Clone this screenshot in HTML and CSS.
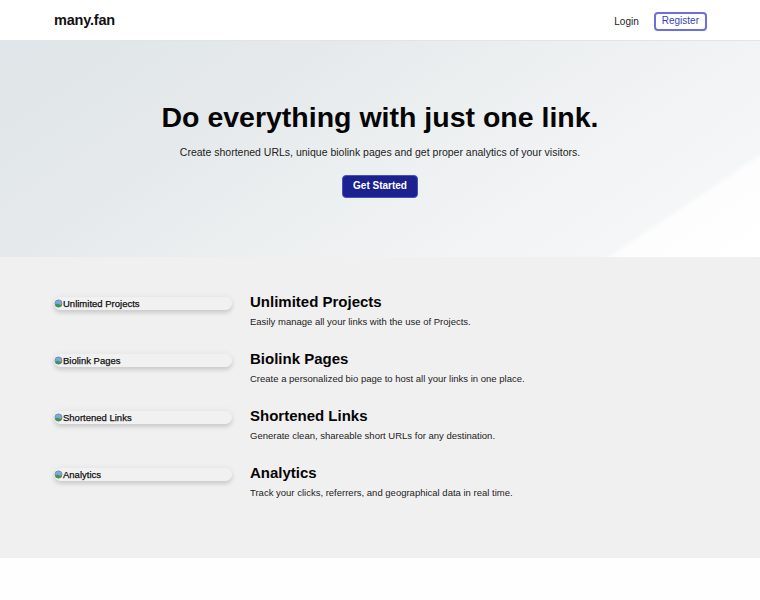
FILE: index.html
```html
<!DOCTYPE html>
<html lang="en">
<head>
<meta charset="utf-8">
<title>many.fan</title>
<link rel="stylesheet" href="styles.css">
</head>
<body>
<header class="nav">
  <div class="container nav-inner">
    <a class="logo" href="#">many.fan</a>
    <div class="nav-links">
      <a class="login" href="#">Login</a>
      <a class="register" href="#">Register</a>
    </div>
  </div>
</header>
<section class="hero">
  <h1>Do everything with just one link.</h1>
  <p class="lead">Create shortened URLs, unique biolink pages and get proper analytics of your visitors.</p>
  <a class="cta" href="#">Get Started</a>
</section>
<section class="features">
  <div class="container feature-list">
    <div class="feature">
      <div class="shot"><svg class="broken" viewBox="0 0 16 16" aria-hidden="true"><circle cx="8" cy="8" r="6.5" fill="#7fa6d8"/><path d="M1.8 10.5 Q5 7 8 9 T14.4 9.5 L14 11 Q11 15 8 14.5 Q4 14.5 1.8 10.5Z" fill="#3f9a3c"/><circle cx="8" cy="8" r="6.5" fill="none" stroke="#5a6f8a" stroke-width="0.8"/></svg>Unlimited Projects</div>
      <div class="text"><h2>Unlimited Projects</h2><p>Easily manage all your links with the use of Projects.</p></div>
    </div>
    <div class="feature">
      <div class="shot"><svg class="broken" viewBox="0 0 16 16" aria-hidden="true"><circle cx="8" cy="8" r="6.5" fill="#7fa6d8"/><path d="M1.8 10.5 Q5 7 8 9 T14.4 9.5 L14 11 Q11 15 8 14.5 Q4 14.5 1.8 10.5Z" fill="#3f9a3c"/><circle cx="8" cy="8" r="6.5" fill="none" stroke="#5a6f8a" stroke-width="0.8"/></svg>Biolink Pages</div>
      <div class="text"><h2>Biolink Pages</h2><p>Create a personalized bio page to host all your links in one place.</p></div>
    </div>
    <div class="feature">
      <div class="shot"><svg class="broken" viewBox="0 0 16 16" aria-hidden="true"><circle cx="8" cy="8" r="6.5" fill="#7fa6d8"/><path d="M1.8 10.5 Q5 7 8 9 T14.4 9.5 L14 11 Q11 15 8 14.5 Q4 14.5 1.8 10.5Z" fill="#3f9a3c"/><circle cx="8" cy="8" r="6.5" fill="none" stroke="#5a6f8a" stroke-width="0.8"/></svg>Shortened Links</div>
      <div class="text"><h2>Shortened Links</h2><p>Generate clean, shareable short URLs for any destination.</p></div>
    </div>
    <div class="feature">
      <div class="shot"><svg class="broken" viewBox="0 0 16 16" aria-hidden="true"><circle cx="8" cy="8" r="6.5" fill="#7fa6d8"/><path d="M1.8 10.5 Q5 7 8 9 T14.4 9.5 L14 11 Q11 15 8 14.5 Q4 14.5 1.8 10.5Z" fill="#3f9a3c"/><circle cx="8" cy="8" r="6.5" fill="none" stroke="#5a6f8a" stroke-width="0.8"/></svg>Analytics</div>
      <div class="text"><h2>Analytics</h2><p>Track your clicks, referrers, and geographical data in real time.</p></div>
    </div>
  </div>
</section>
<footer class="foot"></footer>
</body>
</html>
```

FILE: styles.css
```css
* { box-sizing: border-box; }
html, body { margin: 0; padding: 0; }
body {
  font-family: "Liberation Sans", Arial, sans-serif;
  color: #111;
  background: #fdfefd;
}
a { text-decoration: none; color: inherit; }
.container { width: 652px; margin: 0 auto; }
.nav {
  height: 41px;
  background: #fff;
  border-bottom: 1px solid #e4e4e4;
}
.nav-inner {
  height: 40px;
  display: flex;
  align-items: center;
  justify-content: space-between;
}
.logo { font-weight: 700; font-size: 14.5px; color: #111; letter-spacing: -0.2px; margin-top: -1px; }
.nav-links { display: flex; align-items: center; gap: 15px; margin-top: 2px; margin-right: -1px; }
.login { font-size: 10px; color: #222; }
.register {
  font-size: 10px;
  line-height: 12px;
  color: #3c3fb5;
  border: 2px solid #6b6fe0;
  border-radius: 4px;
  padding: 1px 6px 2px;
}
.hero {
  height: 216px;
  background: linear-gradient(146deg, #dfe5e8 0%, #e5e9eb 30%, #eceff0 50%, #f1f3f4 70%, #f4f6f7 85.5%, #fdfdfd 86.5%, #ffffff 100%);
  display: flex;
  flex-direction: column;
  align-items: center;
  padding-top: 59px;
}
.hero h1 {
  margin: 0;
  font-size: 28.5px;
  font-weight: 700;
  color: #050505;
  line-height: 34px;
}
.lead { margin: 11px 0 0; font-size: 10.5px; color: #222; line-height: 14px; }
.cta {
  margin-top: 16px;
  background: #1b2290;
  color: #fff;
  font-size: 10px;
  font-weight: 700;
  padding: 4px 10px 5px;
  line-height: 12px;
  border-radius: 4px;
  border: 1px solid #4a50c0;
}
.features {
  background: #f1f0f1;
  height: 301px;
  padding-top: 35px;
}
.feature-list { display: flex; flex-direction: column; gap: 20px; }
.feature { display: flex; align-items: flex-start; gap: 18px; }
.shot {
  width: 178px;
  margin-top: 5px;
  display: flex;
  align-items: center;
  font-size: 9.5px;
  color: #111;
  -webkit-text-stroke: 0.25px #111;
  background: #f2f1f2;
  border-radius: 7px;
  height: 13px;
  box-shadow: 0 3px 4px rgba(0,0,0,0.13), 0 0 7px rgba(0,0,0,0.06);
}
.broken { width: 9px; height: 9px; margin-right: 0; flex: none; }
.text h2 { margin: 0; font-size: 15px; line-height: 19px; font-weight: 700; color: #050505; }
.text p { margin: 3px 0 0; font-size: 9.5px; line-height: 15px; color: #222; }
.foot { height: 42px; background: #fdfefd; }
```
